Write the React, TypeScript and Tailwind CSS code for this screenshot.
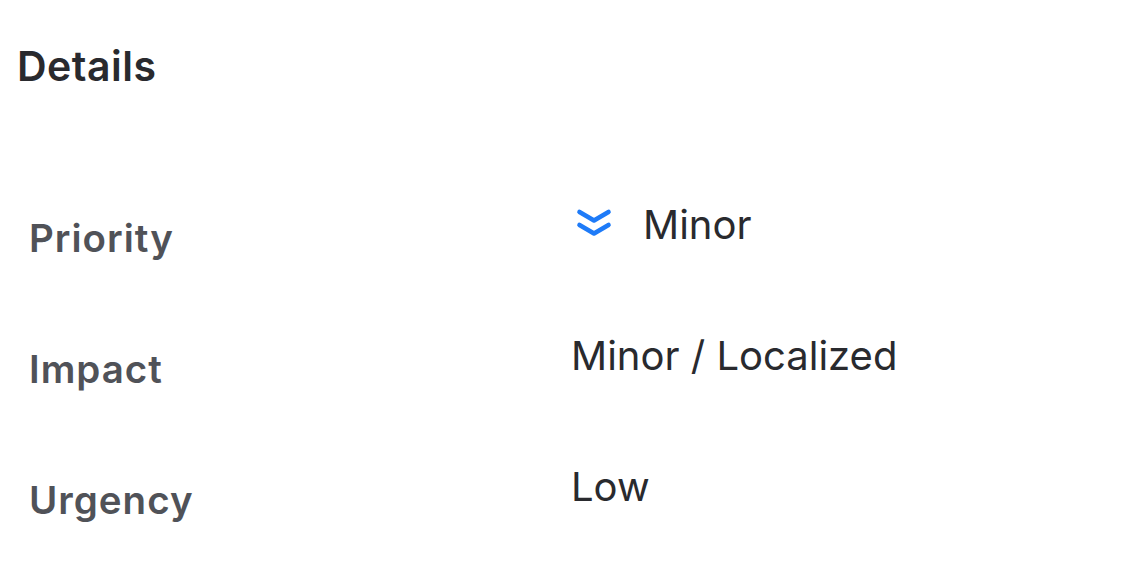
import React from "react";

const rows = [
  { label: "Priority", value: "Minor", icon: true },
  { label: "Impact", value: "Minor / Localized", icon: false },
  { label: "Urgency", value: "Low", icon: false },
];

function MinorIcon() {
  return (
    <svg width="36" height="30" viewBox="0 0 36 30" fill="none" className="shrink-0">
      <path d="M3.5 5 L18 13.5 L32.5 5" stroke="#1e7bf8" strokeWidth="4.6" strokeLinecap="round" strokeLinejoin="round" />
      <path d="M3.5 18 L18 26.5 L32.5 18" stroke="#1e7bf8" strokeWidth="4.6" strokeLinecap="round" strokeLinejoin="round" />
    </svg>
  );
}

export default function App() {
  return (
    <div className="w-[1138px] h-[569px] bg-white overflow-hidden" style={{ fontFamily: "Inter, 'Noto Sans', sans-serif" }}>
      <h2 className="pt-[46px] pl-[17px] text-[41px] leading-none font-semibold text-[#292a2e] tracking-[0.5px]">Details</h2>
      <div className="mt-[118px] flex flex-col">
        {rows.map((r) => (
          <div key={r.label} className="h-[131px] flex">
            <div className="w-[571px] pl-[29px] pt-[14px] text-[38.5px] leading-none font-semibold text-[#505258] tracking-[1px]">
              {r.label}
            </div>
            <div className="flex items-start text-[40px] leading-none text-[#292a2e]">
              {r.icon && (
                <div className="ml-[5px] mr-[31px] mt-[2px]">
                  <MinorIcon />
                </div>
              )}
              <span>{r.value}</span>
            </div>
          </div>
        ))}
      </div>
    </div>
  );
}
